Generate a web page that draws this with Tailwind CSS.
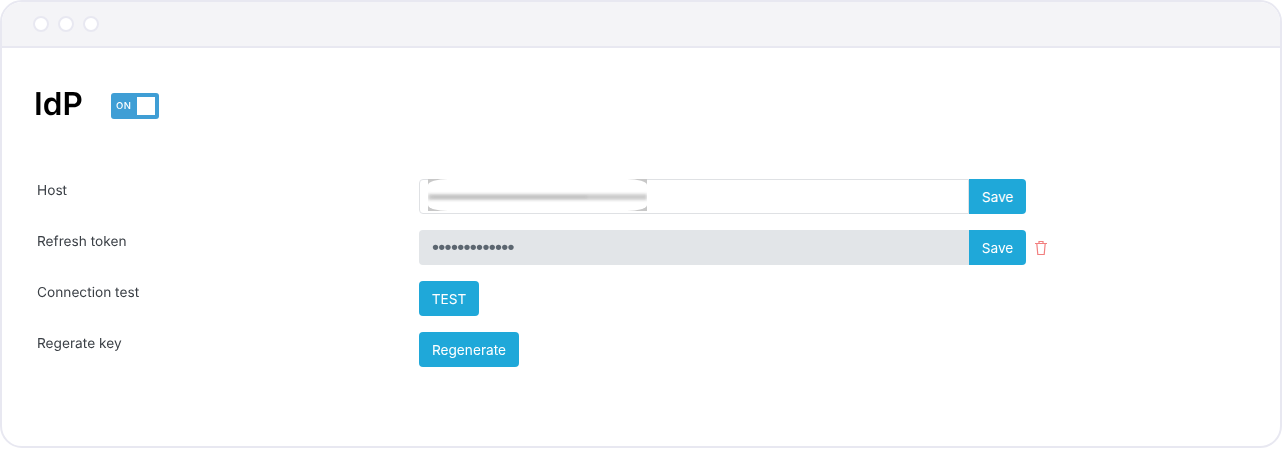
<!DOCTYPE html>
<html lang="en">
<head>
    <meta charset="UTF-8">
    <script src="https://cdn.jsdelivr.net/npm/@tailwindcss/browser@4"></script>
    <title>IdP</title>
</head>
<body class="bg-white font-['Inter',sans-serif] [text-rendering:geometricPrecision] antialiased">
    <div class="w-[1282px] h-[449px] overflow-hidden transform-gpu">
        <div class="h-[448px] border-2 border-[#e8e8f1] rounded-[22px] overflow-hidden bg-white">
            <div class="h-[46px] bg-[#f4f4f7] border-b-2 border-[#e8e8f1] flex items-center gap-[9px] pl-[31px]">
                <span class="w-4 h-4 rounded-full bg-white border-2 border-[#e8e8f1]"></span>
                <span class="w-4 h-4 rounded-full bg-white border-2 border-[#e8e8f1]"></span>
                <span class="w-4 h-4 rounded-full bg-white border-2 border-[#e8e8f1]"></span>
            </div>

            <div class="pl-[35px]">
                <div class="flex items-center h-[60px] mt-[27px] mb-[44px]">
                    <h1 class="w-[77px] -ml-[3px] pb-[2px] text-[31.5px] leading-[40px] font-semibold text-black">IdP</h1>
                    <div class="w-12 h-[26px] rounded-[3px] bg-[#3f9ed5] flex items-center justify-between pl-[5px] pr-[4px] mt-[2px]">
                        <span class="pt-[2px] text-[9.5px] font-medium text-white tracking-[0.4px]">ON</span>
                        <span class="w-[18px] h-[18px] bg-white"></span>
                    </div>
                </div>

                <div class="flex flex-col gap-4">
                    <div class="flex h-[35px]">
                        <label class="w-[382px] text-[13.7px] leading-[24px] text-[#3a3f45]">Host</label>
                        <div class="flex relative">
                            <input type="text" class="w-[550px] h-[35px] border border-[#dfe1e4] rounded-l-[4px] bg-white">
                            <button class="w-[57px] h-[35px] pt-[2px] bg-[#1fa8d9] text-white text-[13.7px] rounded-r-[4px]">Save</button>
                            <div class="absolute left-[9px] top-0 w-[219px] h-[32px] bg-[#c8c8c8] overflow-hidden">
                                <div class="absolute inset-0 rounded-[20px/6px] bg-white blur-[0.5px]"></div>
                                <div class="absolute left-0 right-0 top-[15px] h-[6px] bg-[#cccccc] blur-[1.5px]"></div>
                                <div class="absolute left-[4px] right-[60px] top-[17px] h-[2px] bg-[#c2c2c2] blur-[1px]"></div>
                            </div>
                        </div>
                    </div>
                    <div class="flex h-[35px]">
                        <label class="w-[382px] text-[13.7px] leading-[24px] text-[#3a3f45]">Refresh token</label>
                        <div class="flex items-center">
                            <div class="w-[550px] h-[35px] pt-[1px] bg-[#e2e5e8] rounded-l-[4px] pl-[13px] font-['Liberation_Sans',sans-serif] text-[20px] tracking-[-0.7px] leading-[35px] text-[#5c6670]">•••••••••••••</div>
                            <button class="w-[57px] h-[35px] pt-[2px] bg-[#1fa8d9] text-white text-[13.7px] rounded-r-[4px]">Save</button>
                            <svg class="ml-[8px]" width="14" height="16" viewBox="0 0 14 16" fill="none" stroke="#f27f7f" stroke-width="1.2">
                                <path d="M1 3.5h12M5 3.5V1.5h4v2M2.8 3.5l1 11h6.4l1-11"/>
                            </svg>
                        </div>
                    </div>
                    <div class="flex h-[35px]">
                        <label class="w-[382px] text-[13.7px] leading-[24px] text-[#3a3f45]">Connection test</label>
                        <button class="w-[60px] h-[35px] pt-[2px] bg-[#1fa8d9] text-white text-[13.7px] rounded-[4px]">TEST</button>
                    </div>
                    <div class="flex h-[35px]">
                        <label class="w-[382px] text-[13.7px] leading-[24px] text-[#3a3f45]">Regerate key</label>
                        <button class="w-[100px] h-[35px] pt-[2px] bg-[#1fa8d9] text-white text-[13.7px] rounded-[4px]">Regenerate</button>
                    </div>
                </div>
            </div>
        </div>
    </div>
</body>
</html>
